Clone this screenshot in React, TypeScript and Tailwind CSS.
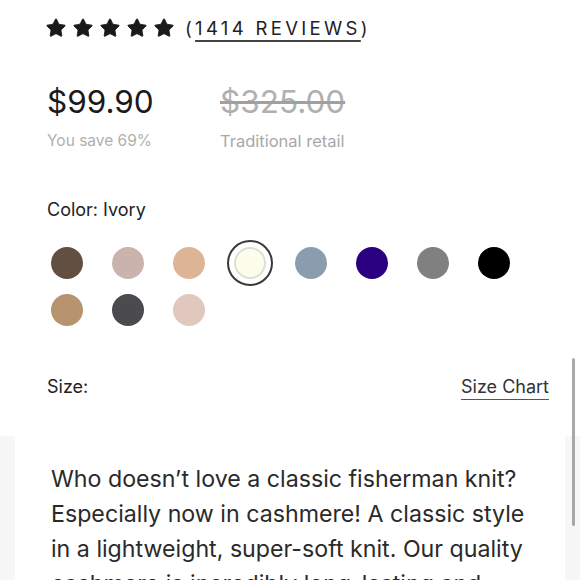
import { Star } from 'lucide-react'

const swatches = [
  { name: 'Chocolate', color: '#634f41' },
  { name: 'Blush', color: '#cbb3ad' },
  { name: 'Camel Light', color: '#ddb596' },
  { name: 'Ivory', color: '#fdfdec', selected: true },
  { name: 'Slate Blue', color: '#8a9daf' },
  { name: 'Indigo', color: '#2b0080' },
  { name: 'Grey', color: '#808080' },
  { name: 'Black', color: '#000000' },
  { name: 'Camel', color: '#b89370' },
  { name: 'Charcoal', color: '#4a4a4f' },
  { name: 'Rose', color: '#e0c8bf' },
]

export default function App() {
  return (
    <div className="relative w-[580px] h-[580px] overflow-hidden bg-white text-[#222] font-['Inter','Liberation_Sans',sans-serif]">
      <div className="pl-[47px] pr-[31px]">
        {/* Rating */}
        <div className="flex items-center pt-[14px] h-[42px]">
          <div className="flex gap-[5px] -ml-[2px]">
            {[0, 1, 2, 3, 4].map((i) => (
              <Star key={i} size={22} fill="#1a1a1a" stroke="#1a1a1a" strokeWidth={1} />
            ))}
          </div>
          <span className="ml-[10px] text-[18.5px] tracking-[0.18em] text-[#222] leading-none">
            (<span className="underline decoration-[#444] decoration-2 underline-offset-[5px]">1414 REVIEWS</span>)
          </span>
        </div>

        {/* Price */}
        <div className="flex mt-[43px]">
          <div className="w-[173px]">
            <div className="text-[31.5px] leading-[34px] text-[#1a1a1a]">$99.90</div>
            <div className="mt-[10px] text-[15.5px] text-[#b0b0b0]">You save 69%</div>
          </div>
          <div>
            <div className="text-[31.5px] leading-[34px] text-[#b0b0b0] line-through decoration-[#a0a0a0]">$325.00</div>
            <div className="mt-[10px] text-[16.5px] text-[#a8a8a8]">Traditional retail</div>
          </div>
        </div>

        {/* Color */}
        <div className="mt-[42px] text-[18px] text-[#222]">Color: Ivory</div>
        <div className="mt-[24px] grid grid-cols-[repeat(8,61px)] gap-y-[15px] -ml-[11px]">
          {swatches.map((s) => (
            <div key={s.name} className="flex items-center justify-center h-[32px]">
              {s.selected ? (
                <div className="w-[46px] h-[46px] rounded-full border-2 border-[#3a3a3a] flex items-center justify-center">
                  <div className="w-[32px] h-[32px] rounded-full border-2 border-[#dedfd4]" style={{ backgroundColor: s.color }} />
                </div>
              ) : (
                <div className="w-[32px] h-[32px] rounded-full" style={{ backgroundColor: s.color }} />
              )}
            </div>
          ))}
        </div>

        {/* Size */}
        <div className="mt-[47px] flex items-center justify-between text-[18px]">
          <span className="text-[#222]">Size:</span>
          <span className="text-[#333] underline decoration-[#555] underline-offset-[6px]">Size Chart</span>
        </div>
      </div>

      {/* Description */}
      <div className="mt-[36px] bg-[#f7f7f7] px-[15px] h-[200px]">
        <div className="bg-white h-full pl-[36px] pt-[26px] text-[23.2px] leading-[35px] text-[#2a2a2a] whitespace-nowrap">
          Who doesn’t love a classic fisherman knit?<br />
          Especially now in cashmere! A classic style<br />
          in a lightweight, super-soft knit. Our quality<br />
          cashmere is incredibly long-lasting and
        </div>
      </div>

      {/* Scrollbar thumb */}
      <div className="absolute right-[5px] top-[358px] w-[3px] h-[168px] rounded-full bg-[#a8a8a8]" />
    </div>
  )
}
